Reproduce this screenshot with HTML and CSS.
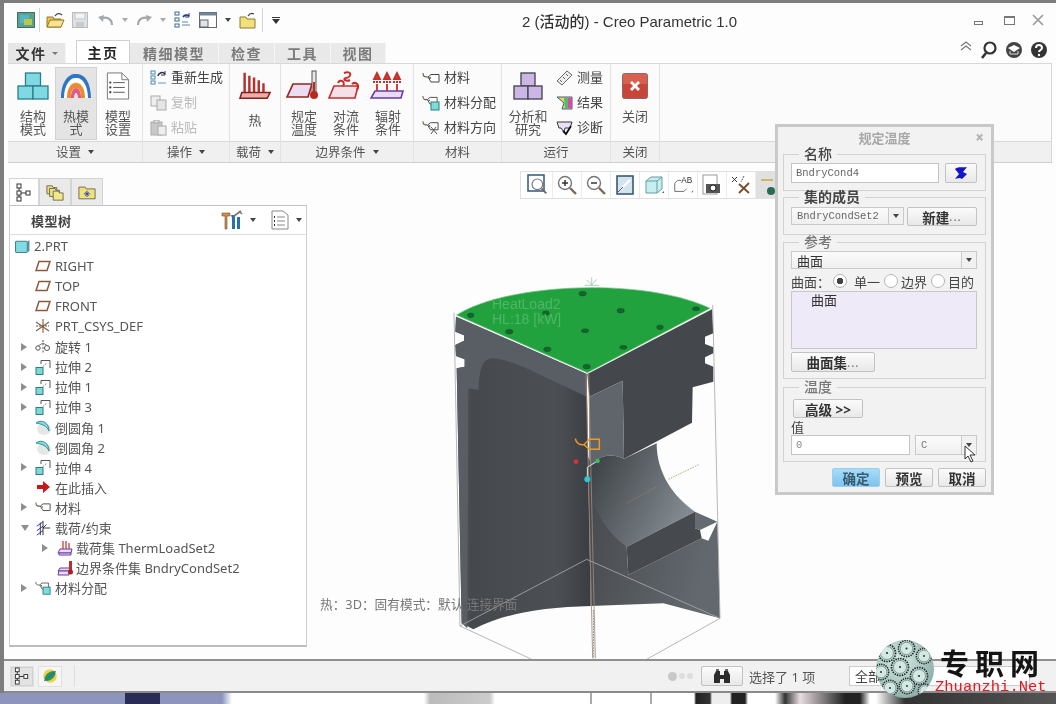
FILE: index.html
```html
<!DOCTYPE html>
<html lang="zh">
<head>
<meta charset="utf-8">
<title>Creo Parametric 1.0</title>
<link rel="stylesheet" href="styles.css">
</head>
<body>
<svg class="defs" width="0" height="0" aria-hidden="true">
  <defs>
    <symbol id="plane" viewBox="0 0 16 12"><path d="M4 1.500H15L12 10.500H1Z" fill="#fff" stroke="#8a5a3c" stroke-width="1.500"/></symbol>
    <symbol id="extrude" viewBox="0 0 16 16"><path d="M6 5V1.500H15V9" fill="none" stroke="#555" stroke-width="1"/><path d="M6 9L12 4" stroke="#888" stroke-dasharray="1.500 1"/><rect x="1" y="8.500" width="7" height="7" fill="#7fd8d4" stroke="#2c7f80"/></symbol>
    <symbol id="round" viewBox="0 0 16 16"><ellipse cx="9" cy="10" rx="7" ry="6" fill="#e4e8e4"/><path d="M1 4C6 0 14 3 14 12C12 7 7 5 1 4Z" fill="#86dcdc" stroke="#3a8c96"/></symbol>
    <symbol id="tag" viewBox="0 0 18 12"><path d="M1 1C1 5 3 5 6 5" fill="none" stroke="#664" stroke-width="1.200"/><path d="M6 5L9 2.500H17V10H9Z" fill="#fff" stroke="#444"/><circle cx="8" cy="6" r=".9" fill="#444"/></symbol>
    <symbol id="tri" viewBox="0 0 8 10"><path d="M1 1L7 5L1 9Z" fill="#8e8e8e"/></symbol>
    <symbol id="mag" viewBox="0 0 22 22"><circle cx="9" cy="9" r="6.500" fill="#fff" stroke="#777" stroke-width="1.400"/><path d="M14 14L20 20" stroke="#7a6a58" stroke-width="2.400"/></symbol>
    <symbol id="gear" viewBox="0 0 40 40"><circle cx="20" cy="20" r="17" fill="#c4dfd9" stroke="#22302e" stroke-width="3.500" stroke-dasharray="3 2"/><circle cx="20" cy="20" r="13" fill="#d3e8e3" stroke="#3c4f4c"/><circle cx="20" cy="20" r="2" fill="#1d2a28"/></symbol>
  </defs>
</svg>

<div class="app">
  <div class="window">
    <header class="titlebar">
      <div class="quick">
        <svg class="qi q1" viewBox="0 0 18 16"><rect x=".5" y=".5" width="17" height="15" fill="#5aa08e" stroke="#3f6f66"/><rect x="3" y="3" width="9" height="8" fill="#56b4c8"/><rect x="7" y="7" width="8" height="6" fill="#b6c94a"/></svg>
        <span class="qsep"></span>
        <svg class="qi q2" viewBox="0 0 19 16"><path d="M1 5H7L8 7H15V15H1Z" fill="#e8c65a" stroke="#96762a"/><path d="M1 15L4 8H18L15 15Z" fill="#f8e48c" stroke="#96762a"/><path d="M9 4C11 1 14 1 16 3" fill="none" stroke="#444" stroke-width="1.300"/></svg>
        <svg class="qi q3" viewBox="0 0 16 16"><rect x=".5" y=".5" width="15" height="15" fill="#dfe2e4" stroke="#bbb"/><rect x="3" y="1" width="10" height="6" fill="#f3f3f3" stroke="#c4c4c4"/><rect x="4" y="10" width="8" height="5" fill="#c8cbcd"/></svg>
        <svg class="qi q4" viewBox="0 0 16 12"><path d="M14 11C14 4 7 2 3 5" fill="none" stroke="#a4a8ac" stroke-width="2.200"/><path d="M0 3L6 1L5 8Z" fill="#a4a8ac"/></svg>
        <i class="caret light q5"></i>
        <svg class="qi q4b" viewBox="0 0 16 12"><path d="M2 11C2 4 9 2 13 5" fill="none" stroke="#a4a8ac" stroke-width="2.200"/><path d="M16 3L10 1L11 8Z" fill="#a4a8ac"/></svg>
        <i class="caret light q6"></i>
        <svg class="qi q7" viewBox="0 0 17 18"><g fill="#fff" stroke="#3a6a90"><rect x="1" y="1" width="4" height="3"/><rect x="1" y="7" width="4" height="3"/><rect x="1" y="13" width="4" height="3"/></g><path d="M8 14H16M8 11H14" stroke="#5a8aa8"/><path d="M9 6A4 4 0 0 1 15 5" fill="none" stroke="#238" stroke-width="1.600"/><path d="M15 2V6H11" fill="none" stroke="#238"/></svg>
        <svg class="qi q8" viewBox="0 0 18 16"><rect x=".5" y=".5" width="17" height="15" fill="#fff" stroke="#666"/><rect x=".5" y=".5" width="17" height="3" fill="#6f8798"/><rect x="1" y="8" width="8" height="7" fill="#dfe6ea" stroke="#666"/></svg>
        <i class="caret q9"></i>
        <svg class="qi q10" viewBox="0 0 17 18"><path d="M1 6H7L8 8H16V17H1Z" fill="#f2e07a" stroke="#8a7c30"/><path d="M9 5C11 2 13 2 15 3" fill="none" stroke="#444" stroke-width="1.300"/></svg>
        <span class="qsep s2"></span>
        <span class="qmore"></span>
      </div>
      <h1 class="title">2 (活动的) - Creo Parametric 1.0</h1>
      <div class="winctl">
        <span class="wmin"></span>
        <span class="wmax"></span>
        <svg class="wclose" viewBox="0 0 12 12"><path d="M1 1L11 11M11 1L1 11" stroke="#999" stroke-width="1.600"/></svg>
      </div>
    </header>

    <nav class="tabs">
      <span class="tab file">文件<i class="caret small"></i></span>
      <span class="tab active">主页</span>
      <span class="tab w89">精细模型</span>
      <span class="tab w56">检查</span>
      <span class="tab w56">工具</span>
      <span class="tab w55">视图</span>
      <div class="helpers">
        <svg class="h-up" viewBox="0 0 12 10"><path d="M1 5L6 1L11 5M1 9L6 5L11 9" fill="none" stroke="#777" stroke-width="1.200"/></svg>
        <svg class="h-i" viewBox="0 0 18 18"><circle cx="10" cy="7" r="5.500" fill="#fff" stroke="#333" stroke-width="2.200"/><path d="M6 12L2 17" stroke="#333" stroke-width="2.600"/></svg>
        <svg class="h-i" viewBox="0 0 18 18"><circle cx="9" cy="9" r="8" fill="#444"/><path d="M3 7L9 11L15 7L9 4Z" fill="#fff"/><path d="M5 10V13H13V10" fill="none" stroke="#ddd"/></svg>
        <svg class="h-i" viewBox="0 0 18 18"><circle cx="9" cy="9" r="8" fill="#333"/><path d="M6 7C6 3 12 3 12 7C12 9 9 9 9 11" fill="none" stroke="#fff" stroke-width="2"/><circle cx="9" cy="14" r="1.200" fill="#fff"/></svg>
      </div>
    </nav>

    <section class="ribbon">
      <div class="group g-setup">
        <div class="gbody">
          <div class="big b32">
            <svg class="ico" viewBox="0 0 32 28"><g fill="#7fd9e2" stroke="#2b7d8c" stroke-width="1.300"><rect x="8.500" y="1" width="15" height="13"/><rect x="1" y="14" width="15" height="13"/><rect x="16" y="14" width="15" height="13"/></g></svg>
            <span>结构<br>模式</span>
          </div>
          <div class="big b42 on">
            <svg class="ico" viewBox="0 0 32 30"><path d="M1 26C1 8 10 1 16 2C24 1 31 10 31 26H26C26 14 22 9 16 9C10 9 6 14 6 26Z" fill="#2f76c4"/><path d="M4 26C4 12 11 5 16 6C22 5 28 13 28 26H25C25 15 21 10 16 10C11 10 7 15 7 26Z" fill="#fff"/><path d="M7 26C7 15 12 11 16 11C20 11 25 15 25 26H21C21 18 19 16 16 16C13 16 11 18 11 26Z" fill="#ef8a2a"/><path d="M11 26C11 20 13 16 16 16C19 16 21 20 21 26H18C18 23 17 21 16 21C15 21 14 23 14 26Z" fill="#e05a8a"/></svg>
            <span>热模<br>式</span>
          </div>
          <div class="big b32">
            <svg class="ico doc" viewBox="0 0 24 29"><path d="M1 1H16L23 8V28H1Z" fill="#fff" stroke="#777"/><path d="M16 1V8H23" fill="none" stroke="#777"/><g stroke="#555"><path d="M7 11H19M7 16H19M7 21H19"/></g><g fill="#444"><circle cx="4" cy="11" r="1.200"/><circle cx="4" cy="16" r="1.200"/><circle cx="4" cy="21" r="1.200"/></g></svg>
            <span>模型<br>设置</span>
          </div>
        </div>
        <div class="glabel">设置<i class="caret"></i></div>
      </div>

      <div class="group g-ops">
        <div class="gbody stack ops">
          <div class="item"><svg class="sm" viewBox="0 0 17 16"><g fill="#fff" stroke="#4a86b0"><rect x="1" y="1" width="4" height="3"/><rect x="1" y="6" width="4" height="3"/><rect x="1" y="11" width="4" height="3"/></g><path d="M8 13H16" stroke="#6a98b8"/><path d="M8 6A4 4 0 0 1 15 4" fill="none" stroke="#235" stroke-width="1.600"/><path d="M15 1V5H11" fill="none" stroke="#235"/></svg>重新生成</div>
          <div class="item off"><svg class="sm" viewBox="0 0 17 16"><rect x="1" y="1" width="9" height="10" fill="#eee" stroke="#aaa"/><rect x="7" y="5" width="9" height="10" fill="#e4e4e4" stroke="#aaa"/></svg>复制</div>
          <div class="item off"><svg class="sm" viewBox="0 0 17 16"><rect x="1" y="2" width="11" height="13" fill="#c8c8c8" stroke="#aaa"/><rect x="4" y="0" width="5" height="3" fill="#ddd" stroke="#aaa"/><rect x="8" y="6" width="8" height="9" fill="#eee" stroke="#aaa"/></svg>粘贴</div>
        </div>
        <div class="glabel">操作<i class="caret"></i></div>
      </div>

      <div class="group g-load">
        <div class="gbody">
          <div class="big b32 single">
            <svg class="ico" viewBox="0 0 34 30"><g stroke="#b8302c" stroke-width="2.600"><path d="M6 1V22M11 4V22M16 6V22M21 9V22M26 12V22"/></g><path d="M3 22H33L30 28H1Z" fill="#e8b0a8" stroke="#8a1f1f" stroke-width="1.600"/></svg>
            <span>热</span>
          </div>
        </div>
        <div class="glabel">载荷<i class="caret"></i></div>
      </div>

      <div class="group g-bc">
        <div class="gbody tight">
          <div class="big b42b">
            <svg class="ico" viewBox="0 0 36 30"><path d="M7 14H26L22 27H1Z" fill="#ebdcf0" stroke="#9c2020" stroke-width="1.700"/><rect x="26" y="1" width="4" height="22" fill="#e8e8e8" stroke="#555"/><rect x="27" y="12" width="2" height="12" fill="#b82a20"/><circle cx="28" cy="25" r="4" fill="#b82a20"/></svg>
            <span>规定<br>温度</span>
          </div>
          <div class="big b42b">
            <svg class="ico" viewBox="0 0 36 30"><path d="M6 16H30L27 28H1Z" fill="#f3e0e8" stroke="#c03030" stroke-width="1.600"/><g fill="none" stroke="#c82a26" stroke-width="2"><path d="M16 3C24 0 24 7 18 8C14 9 18 12 22 10"/><path d="M10 13C12 8 18 12 15 16"/><path d="M24 14C28 11 32 15 29 20"/></g></svg>
            <span>对流<br>条件</span>
          </div>
          <div class="big b42b">
            <svg class="ico" viewBox="0 0 36 30"><path d="M5 21H33L31 28H1Z" fill="#e7dcf4" stroke="#6a3aa8" stroke-width="1.600"/><g stroke="#c4302c" stroke-width="1.800" fill="#d83a34"><path d="M7 21V14M7 3L4 9H10ZM17 21V14M17 3L14 9H20ZM27 21V14M27 3L24 9H30Z"/><path d="M3 12H11M13 12H21M23 12H31" stroke-dasharray="2 1"/></g></svg>
            <span>辐射<br>条件</span>
          </div>
        </div>
        <div class="glabel">边界条件<i class="caret"></i></div>
      </div>

      <div class="group g-mat">
        <div class="gbody stack mats">
          <div class="item"><svg class="sm wide" viewBox="0 0 18 12"><use href="#tag"/></svg>材料</div>
          <div class="item"><svg class="sm wide" viewBox="0 0 18 16"><use href="#tag" width="16" height="11"/><rect x="9" y="7" width="8" height="8" fill="#7fdad8" stroke="#27808a"/></svg>材料分配</div>
          <div class="item"><svg class="sm wide" viewBox="0 0 18 16"><use href="#tag" width="17" height="12"/><path d="M9 7L15 14M14 7L9 14" stroke="#555"/></svg>材料方向</div>
        </div>
        <div class="glabel">材料</div>
      </div>

      <div class="group g-run">
        <div class="gbody">
          <div class="big b42c">
            <svg class="ico" viewBox="0 0 30 28"><g fill="#ccb6e6" stroke="#4a4a58" stroke-width="1.400"><rect x="8" y="1" width="14" height="13"/><rect x="1" y="14" width="14" height="13"/><rect x="15" y="14" width="14" height="13"/></g></svg>
            <span>分析和<br>研究</span>
          </div>
          <div class="stack runs">
            <div class="item"><svg class="sm" viewBox="0 0 17 16"><path d="M1 11L11 1L16 5L6 15Z" fill="#eee" stroke="#666"/><path d="M4 10L6 12M7 7L9 9M10 4L12 6" stroke="#666"/></svg>测量</div>
            <div class="item"><svg class="sm" viewBox="0 0 17 16"><path d="M1 2H16V14H6L8 8Z" fill="#e8d84a" stroke="#3a5a9a"/><path d="M8 3H12V13H9Z" fill="#48c070"/><path d="M12 3H16V13H12Z" fill="#d84aa8"/></svg>结果</div>
            <div class="item"><svg class="sm" viewBox="0 0 17 16"><path d="M1 2H16L14 8H9L8 12L5 8H3Z" fill="#eadff4" stroke="#334"/><path d="M7 11L10 14L15 6" fill="none" stroke="#111" stroke-width="1.800"/></svg>诊断</div>
          </div>
        </div>
        <div class="glabel">运行</div>
      </div>

      <div class="group g-close">
        <div class="gbody">
          <div class="big bclose">
            <svg class="ico" viewBox="0 0 26 26"><rect x=".5" y=".5" width="25" height="25" rx="2" fill="#c8453a" stroke="#8a6a66"/><rect x="1" y="1" width="24" height="10" fill="#d8604f"/><path d="M9 9L17 17M17 9L9 17" stroke="#fff" stroke-width="2.800"/></svg>
            <span>关闭</span>
          </div>
        </div>
        <div class="glabel">关闭</div>
      </div>
      <div class="group g-rest"><div class="gbody"></div><div class="glabel"></div></div>
    </section>

    <main class="main">
      <aside class="side">
        <div class="sidetabs">
          <span class="stab on"><svg viewBox="0 0 16 19"><g fill="#fff" stroke="#333"><rect x="1" y="1" width="4" height="4"/><rect x="1" y="8" width="4" height="4"/><rect x="1" y="14" width="4" height="4"/><rect x="10" y="8" width="4" height="4"/></g><path d="M3 5V8M3 12V14M5 10H10" stroke="#333"/></svg></span>
          <span class="stab"><svg viewBox="0 0 20 19"><path d="M1 2H7L8 4H12V11H1Z" fill="#e8dc78" stroke="#665"/><path d="M4 5H10L11 7H15V14H4Z" fill="#efe282" stroke="#665"/><path d="M8 8H14L15 10H19V18H8Z" fill="#f2e88a" stroke="#665"/></svg></span>
          <span class="stab"><svg viewBox="0 0 20 16"><path d="M1 2H8L9 4H19V15H1Z" fill="#f0e27a" stroke="#665"/><path d="M10 6V13M6.500 9.500H13.500M8 7.500L12 11.500M12 7.500L8 11.500" stroke="#2a3fc0"/></svg></span>
        </div>
        <div class="panel">
          <div class="phead">
            <strong>模型树</strong>
            <svg class="tools" viewBox="0 0 22 20"><path d="M1 3H9V6H6V19H4V6H1Z" fill="#e08a30" stroke="#555" stroke-width=".6"/><path d="M10 5H14V19H11V8Z" fill="#2c6fb0"/><path d="M13 6L20 1M18 1L21 4" stroke="#777" stroke-width="1.600"/><rect x="16" y="7" width="3" height="12" fill="#2c6fb0"/></svg>
            <i class="caret"></i>
            <svg class="tools2" viewBox="0 0 18 20"><path d="M1 1H12L17 5V19H1Z" fill="#fff" stroke="#888"/><path d="M6 7H14M6 11H14M6 15H14" stroke="#888"/><path d="M3 7H4M3 11H4M3 15H4" stroke="#333" stroke-width="2"/></svg>
            <i class="caret"></i>
          </div>
          <ul class="tree">
            <li class="row top"><svg class="ti part" viewBox="0 0 14 13"><rect x=".5" y="2" width="11" height="10.500" rx="1" fill="#7fdce2" stroke="#4a7f88"/><path d="M12 2L13.500 1V11L12 12.500Z" fill="#5a8f98"/></svg>2.PRT</li>
            <li class="row l1"><svg class="ti" viewBox="0 0 16 12"><use href="#plane"/></svg>RIGHT</li>
            <li class="row l1"><svg class="ti" viewBox="0 0 16 12"><use href="#plane"/></svg>TOP</li>
            <li class="row l1"><svg class="ti" viewBox="0 0 16 12"><use href="#plane"/></svg>FRONT</li>
            <li class="row l1"><svg class="ti" viewBox="0 0 16 16"><path d="M1 4L14 13M1 13L14 4M8 1V15" stroke="#8a5a3c" stroke-width="1.100"/><path d="M1 8H14" stroke="#555" stroke-dasharray="2 1"/></svg>PRT_CSYS_DEF</li>
            <li class="row l1 x"><svg class="tw" viewBox="0 0 8 10"><use href="#tri"/></svg><svg class="ti" viewBox="0 0 16 16"><path d="M8 1V15" stroke="#555" stroke-dasharray="2 1.500"/><circle cx="3" cy="9" r="2.200" fill="#fff" stroke="#555"/><circle cx="12" cy="9" r="2.500" fill="#fff" stroke="#555"/><path d="M3 7L8 4L13 7" fill="none" stroke="#777"/></svg>旋转 1</li>
            <li class="row l1 x"><svg class="tw" viewBox="0 0 8 10"><use href="#tri"/></svg><svg class="ti" viewBox="0 0 16 16"><use href="#extrude"/></svg>拉伸 2</li>
            <li class="row l1 x"><svg class="tw" viewBox="0 0 8 10"><use href="#tri"/></svg><svg class="ti" viewBox="0 0 16 16"><use href="#extrude"/></svg>拉伸 1</li>
            <li class="row l1 x"><svg class="tw" viewBox="0 0 8 10"><use href="#tri"/></svg><svg class="ti" viewBox="0 0 16 16"><use href="#extrude"/></svg>拉伸 3</li>
            <li class="row l1"><svg class="ti" viewBox="0 0 16 16"><use href="#round"/></svg>倒圆角 1</li>
            <li class="row l1"><svg class="ti" viewBox="0 0 16 16"><use href="#round"/></svg>倒圆角 2</li>
            <li class="row l1 x"><svg class="tw" viewBox="0 0 8 10"><use href="#tri"/></svg><svg class="ti" viewBox="0 0 16 16"><use href="#extrude"/></svg>拉伸 4</li>
            <li class="row l1"><svg class="ti" viewBox="0 0 16 16"><path d="M2 6H8V2L15 8L8 14V10H2Z" fill="#c81818"/></svg>在此插入</li>
            <li class="row l1 x"><svg class="tw" viewBox="0 0 8 10"><use href="#tri"/></svg><svg class="ti" viewBox="0 0 18 12"><use href="#tag"/></svg>材料</li>
            <li class="row l1 x"><svg class="tw down" viewBox="0 0 10 8"><path d="M1 1H9L5 7Z" fill="#8e8e8e"/></svg><svg class="ti" viewBox="0 0 18 18"><path d="M2 7L9 2M2 12L9 7M2 17L9 12" stroke="#1c2a80"/><path d="M9 1V17M9 9H17M9 9L13 5" stroke="#222" fill="none"/><path d="M6 3V17" stroke="#1c2a80"/></svg>载荷/约束</li>
            <li class="row l2 x"><svg class="tw" viewBox="0 0 8 10"><use href="#tri"/></svg><svg class="ti" viewBox="0 0 16 16"><path d="M6 1V10M9 1V10M12 3V10" stroke="#d05a50" stroke-width="1.500"/><path d="M3 9H15L14 13H1Z" fill="#e8dcf4" stroke="#6a3aa8"/><path d="M2 13H14V15H2Z" fill="#e8dcf4" stroke="#6a3aa8"/></svg>载荷集 ThermLoadSet2</li>
            <li class="row l2"><svg class="tw hide" viewBox="0 0 8 10"></svg><svg class="ti" viewBox="0 0 16 16"><path d="M3 8H13L12 11H1Z" fill="#e8dcf4" stroke="#6a3aa8"/><path d="M2 11H12V15H1Z" fill="#e8dcf4" stroke="#6a3aa8"/><rect x="12" y="1" width="3" height="10" fill="#b83030"/><circle cx="13.500" cy="12" r="2.500" fill="#a82020"/></svg>边界条件集 BndryCondSet2</li>
            <li class="row l1 x"><svg class="tw" viewBox="0 0 8 10"><use href="#tri"/></svg><svg class="ti" viewBox="0 0 18 16"><use href="#tag" width="16" height="11"/><rect x="9" y="7" width="8" height="8" fill="#7fdad8" stroke="#27808a"/></svg>材料分配</li>
          </ul>
        </div>
      </aside>

      <div class="vtools">
        <span class="vt"><svg viewBox="0 0 22 22"><rect x="1" y="1" width="16" height="16" fill="#fff" stroke="#2c5a80" stroke-width="1.500"/><use href="#mag" x="3" y="3" width="18" height="18"/></svg></span>
        <span class="vt"><svg viewBox="0 0 22 22"><use href="#mag"/><path d="M6 9H12M9 6V12" stroke="#333" stroke-width="1.500"/></svg></span>
        <span class="vt"><svg viewBox="0 0 22 22"><use href="#mag"/><path d="M6 9H12" stroke="#333" stroke-width="1.500"/></svg></span>
        <span class="vt"><svg viewBox="0 0 22 22"><rect x="3" y="2" width="16" height="18" fill="#d4e4ee" stroke="#2c4f6a" stroke-width="1.500"/><path d="M6 16L16 6" stroke="#fff" stroke-width="2"/><path d="M4 18L9 13" stroke="#557"/></svg></span>
        <span class="vt"><svg viewBox="0 0 22 22"><path d="M3 7L8 3H19V15L14 19H3Z" fill="#c6f0f0" stroke="#6a9a9a"/><path d="M3 7H14V19M14 7L19 3" fill="none" stroke="#6a9a9a"/><path d="M19 19H21V17Z" fill="#555"/></svg></span>
        <span class="vt"><svg viewBox="0 0 24 22"><path d="M3 9L6 6H10M3 9V18H13L16 15" fill="none" stroke="#666"/><text x="10" y="9" class="vt-t">AB</text><path d="M21 19H23V17Z" fill="#555"/></svg></span>
        <span class="vt"><svg viewBox="0 0 22 22"><rect x="2" y="1" width="14" height="19" fill="#fff" stroke="#999"/><rect x="5" y="10" width="14" height="9" fill="#555"/><circle cx="12" cy="14" r="3" fill="#fff" stroke="#222"/></svg></span>
        <span class="vt"><svg viewBox="0 0 22 22"><path d="M9 10L19 19M19 9L9 19" stroke="#7a4a2c" stroke-width="1.800"/><path d="M2 3L7 8M7 3L2 8" stroke="#333"/><path d="M14 2L11 8" stroke="#555" stroke-dasharray="2 1"/></svg></span>
        <span class="vt act"><svg viewBox="0 0 22 22"><path d="M2 6H14" stroke="#c8a838" stroke-width="1.500"/><path d="M16 2H21L17 12" fill="none" stroke="#333" stroke-width="1.500"/><circle cx="12" cy="17" r="4" fill="#2a6a58"/></svg></span>
      </div>

      <svg class="model" viewBox="0 0 930 1170" aria-label="3D 模型">
        <defs>
          <linearGradient id="bore" x1="0" y1=".1" x2="1" y2=".6"><stop offset="0" stop-color="#3a3e42"/><stop offset=".5" stop-color="#5f656a"/><stop offset="1" stop-color="#858d93"/></linearGradient>
          <linearGradient id="leftf" x1="0" y1="0" x2="1" y2="0"><stop offset="0" stop-color="#5c6167"/><stop offset=".12" stop-color="#45494e"/><stop offset=".75" stop-color="#4c5055"/><stop offset="1" stop-color="#3a3d41"/></linearGradient>
          <linearGradient id="rightl" x1="0" y1="0" x2="1" y2=".3"><stop offset="0" stop-color="#45484c"/><stop offset="1" stop-color="#62686e"/></linearGradient>
        </defs>
        <!-- left wall -->
        <path d="M78 140L470 312L482 1008C340 1012 220 1030 130 1078L95 1060L80 295L104 290L104 268L78 258L76 225L102 212L102 196L76 185Z" fill="url(#leftf)"/>
        <path d="M78 140L470 312L470 380L395 345C320 310 250 270 190 265C160 265 148 290 146 360L115 355L112 1075L95 1060L80 295L104 290L104 268L78 258L76 225L102 212L102 196L76 185Z" fill="#595e64"/>
        <!-- lower right -->
        <path d="M474 560L590 830L595 915L815 805L835 812L862 755L870 1045L700 1000L482 1008Z" fill="url(#rightl)"/>
        <!-- upper right block -->
        <path d="M472 312L846 118L850 190L825 200L825 222L850 232L850 250L825 262L825 280L850 290L850 335L788 352L786 458L582 566L578 332L478 380Z" fill="#44474b"/>
        <path d="M478 380L578 332L582 566C540 548 508 555 478 590Z" fill="#60656b"/>
        <!-- pin bore -->
        <path d="M680 520L582 566C540 548 508 555 478 590L490 700C520 770 555 805 590 830L795 725C730 680 680 610 680 520Z" fill="url(#bore)"/>
        <!-- lower block -->
        <path d="M590 830L795 725V775L810 780L815 805L595 915Z" fill="#46494d"/>
        <path d="M795 725L862 755L810 780L795 775Z" fill="#656b71"/>
        <!-- green top -->
        <path d="M80 135C230 40 640 20 840 115L472 308Z" fill="#22a23f" stroke="#6fbf7f" stroke-width="2"/>
        <g fill="#17652e" stroke="#0c3f1c"><ellipse cx="122" cy="136" rx="10" ry="7"/><ellipse cx="348" cy="129" rx="10" ry="7"/><ellipse cx="238" cy="185" rx="11" ry="7"/><ellipse cx="458" cy="71" rx="11" ry="7"/><ellipse cx="572" cy="122" rx="11" ry="7"/><ellipse cx="798" cy="116" rx="11" ry="6"/><ellipse cx="465" cy="182" rx="11" ry="6"/><ellipse cx="690" cy="172" rx="10" ry="7"/><ellipse cx="352" cy="238" rx="11" ry="7"/><ellipse cx="580" cy="232" rx="11" ry="6"/><ellipse cx="470" cy="290" rx="11" ry="7"/></g>
        <text class="hl" x="186" y="118">HeatLoad2</text>
        <text class="hl" x="186" y="162">HL:18 [kW]</text>
        <path d="M470 30L485 45L500 28M464 46H506M485 22V45" fill="none" stroke="#7fbf8f" stroke-width="2"/>
        <!-- wire box -->
        <g fill="none" stroke="#a8a8a8" stroke-width="2.500">
          <path d="M72 128L90 1068L305 1168M90 1068L470 868L870 1045L650 1168M848 105L870 1045"/>
        </g>
        <path d="M468 310L488 1165M476 310L496 1165" stroke="#a08a78" stroke-width="2.500" fill="none"/>
        <path d="M490 1020L491 1165" stroke="#555" stroke-width="2" stroke-dasharray="5 3"/>
        <path d="M590 700L680 650M715 628L808 583" stroke="#9a8a50" stroke-width="2" stroke-dasharray="5 3" fill="none"/>
        <!-- datum markers -->
        <path d="M436 506C438 520 450 526 462 524L478 508H508V538H478L462 524" fill="none" stroke="#eb9a28" stroke-width="4.500"/>
        <path d="M472 628V592L503 573" stroke="#d8e8e0" stroke-width="3" fill="none"/>
        <circle cx="472" cy="628" r="9" fill="#28c8d0"/><circle cx="503" cy="573" r="6.500" fill="#28c858"/><circle cx="438" cy="575" r="7" fill="#d8303a"/>
      </svg>

      <p class="gstatus">热：3D：固有模式：默认 连接界面</p>

      <form class="dialog">
        <div class="dtitle"><span>规定温度</span><b>×</b></div>
        <fieldset class="fs f1">
          <legend>名称</legend>
          <div class="line">
            <span class="field mono grow">BndryCond4</span>
            <span class="btn b-sym"><svg viewBox="0 0 16 14"><path d="M2 3C6 0 10 2 14 1L10 6L14 8L9 13C6 11 4 13 2 13L6 8Z" fill="#1414c8"/></svg></span>
          </div>
        </fieldset>
        <fieldset class="fs f2">
          <legend class="strong">集的成员</legend>
          <div class="line">
            <span class="combo c-set"><span class="mono">BndryCondSet2</span><i class="drop"><i class="caret"></i></i></span>
            <span class="btn b-new">新建<small>...</small></span>
          </div>
        </fieldset>
        <fieldset class="fs f3">
          <legend class="soft">参考</legend>
          <span class="combo c-full"><span>曲面</span><i class="drop"><i class="caret"></i></i></span>
          <div class="radios">
            <span>曲面：</span><i class="radio on-r"></i><span>单一</span><i class="radio"></i><span>边界</span><i class="radio"></i><span>目的</span>
          </div>
          <div class="listbox">曲面</div>
          <span class="btn b-set">曲面集<small>...</small></span>
        </fieldset>
        <fieldset class="fs f4">
          <legend class="soft">温度</legend>
          <span class="btn b-adv">高级 &gt;&gt;</span>
          <div class="vlabel">值</div>
          <div class="line spaced">
            <span class="field v-in">0</span>
            <span class="combo c-unit"><span class="v-c">C</span><i class="drop"><i class="caret"></i></i></span>
          </div>
        </fieldset>
        <div class="actions">
          <span class="btn act-b primary">确定</span>
          <span class="btn act-b">预览</span>
          <span class="btn act-b">取消</span>
        </div>
        <svg class="cursor" viewBox="0 0 12 18"><path d="M1 1V14L4 11L7 17L9 16L6 10H11Z" fill="#fff" stroke="#333"/></svg>
      </form>
    </main>

    <footer class="status">
      <span class="sbtn on"><svg viewBox="0 0 16 19"><g fill="#fff" stroke="#333"><rect x="1" y="1" width="4" height="4"/><rect x="1" y="8" width="4" height="4"/><rect x="1" y="14" width="4" height="4"/><rect x="10" y="8" width="4" height="4"/></g><path d="M3 5V8M3 12V14M5 10H10" stroke="#333"/></svg></span>
      <span class="sbtn"><svg viewBox="0 0 20 20"><circle cx="10" cy="10" r="8.500" fill="#f0d050"/><ellipse cx="10" cy="10" rx="8" ry="4.500" transform="rotate(-40 10 10)" fill="#2a9a4a"/><path d="M3 16L17 4" stroke="#2a6ac8" stroke-width="1.500"/></svg></span>
      <span class="ssep"></span>
      <div class="sright">
        <span class="dots"><i></i><i class="d2"></i><i class="d2"></i></span>
        <span class="btn binoc"><svg viewBox="0 0 18 16"><path d="M3 3H7V15H1V7ZM11 3H15L17 7V15H11ZM7 7H11V11H7Z" fill="#2c2c2c"/><path d="M3 1H6V3H3ZM12 1H15V3H12Z" fill="#666"/></svg></span>
        <span class="seltext">选择了 1 项</span>
        <span class="sfilter">全部</span>
      </div>
    </footer>
  </div>
  <div class="strip"></div>
  <div class="watermark">
    <svg class="ball" viewBox="0 0 60 60" aria-hidden="true">
      <defs><radialGradient id="sph" cx=".4" cy=".35" r=".8"><stop offset="0" stop-color="#d8ebe6"/><stop offset="1" stop-color="#7fa39c"/></radialGradient><clipPath id="bc"><circle cx="30" cy="30" r="29"/></clipPath></defs>
      <circle cx="30" cy="30" r="29" fill="url(#sph)"/>
      <g clip-path="url(#bc)">
        <use href="#gear" x="2" y="4" width="20" height="20"/><use href="#gear" x="22" y="0" width="19" height="19"/><use href="#gear" x="40" y="8" width="18" height="18"/>
        <use href="#gear" x="-3" y="24" width="18" height="18"/><use href="#gear" x="15" y="18" width="20" height="20"/><use href="#gear" x="34" y="27" width="20" height="20"/>
        <use href="#gear" x="6" y="40" width="18" height="18"/><use href="#gear" x="23" y="38" width="18" height="18"/><use href="#gear" x="42" y="44" width="16" height="16"/>
      </g>
    </svg>
    <div class="wtext">
      <span class="wcn">专职网</span>
      <span class="wen">Zhuanzhi.Net</span>
    </div>
  </div>
</div>
</body>
</html>
```

FILE: styles.css
```css
* { box-sizing: border-box; }
html, body { margin: 0; padding: 0; background: #fff; }
body {
  font-family: "Noto Sans", "Noto Sans CJK SC", sans-serif;
  font-size: 13px;
  color: #444;
}
.defs { position: absolute; }
i { font-style: normal; }

.app {
  position: relative;
  width: 1056px;
  height: 704px;
  overflow: hidden;
  display: flex;
  flex-direction: column;
  filter: blur(.35px);
}
.window {
  height: 693px;
  flex: none;
  display: flex;
  flex-direction: column;
  border-top: 3px solid #7d7d7d;
  border-left: 4px solid #7d7d7d;
  background: #fdfdfd;
}
.strip {
  flex: 1;
  background: linear-gradient(90deg,
    #8d95bf 0, #8d95bf 125px, #2a2c56 125px, #2a2c56 160px, #8d95bf 160px, #8d95bf 222px, #fff 232px,
    #fff 424px, #bbb 430px, #ccc 490px, #fff 495px, #fff 590px, #aaa 590px, #aaa 592px, #fff 592px,
    #fff 650px, #aaa 650px, #aaa 652px, #fff 652px, #fff 694px, #222 696px, #333 710px, #eee 712px,
    #eee 730px, #222 732px, #222 745px, #fff 748px, #fff 775px, #333 785px, #e8dde0 800px, #222 845px, #222 860px, #fff 870px, #fff 876px, #333 905px, #555 1056px);
}

/* title bar */
.titlebar { height: 37px; flex: none; display: flex; align-items: center; padding-bottom: 3px; }
.quick { position: relative; width: 518px; height: 34px; display: flex; align-items: center; padding-left: 13px; flex: none; }
.qi { flex: none; display: block; }
.q1 { width: 18px; height: 16px; }
.qsep { width: 1px; height: 24px; background: #d4d4d4; margin: 0 6px 0 4px; flex: none; }
.q2 { width: 19px; height: 16px; }
.q3 { width: 16px; height: 16px; margin-left: 7px; }
.q4 { width: 16px; height: 12px; margin-left: 10px; }
.q4b { width: 16px; height: 12px; margin-left: 8px; }
.q5, .q6 { margin-left: 8px; }
.q7 { width: 17px; height: 18px; margin-left: 8px; }
.q8 { width: 18px; height: 16px; margin-left: 8px; }
.q9 { margin-left: 8px; }
.q10 { width: 17px; height: 18px; margin-left: 8px; }
.s2 { margin: 0 9px 0 6px; }
.qmore { width: 8px; height: 6px; border-top: 1px solid #333; position: relative; flex: none; }
.qmore::after { content: ""; position: absolute; left: 0; top: 1px; border: 4px solid transparent; border-top: 5px solid #333; }
.title { margin: 0; font: 500 15px "Liberation Sans", "Noto Sans CJK SC", sans-serif; color: #333; white-space: nowrap; }
.winctl { margin-left: auto; display: flex; align-items: center; padding-right: 12px; }
.wmin { width: 9px; height: 4px; border: 1px solid #777; margin-top: 5px; }
.wmax { width: 11px; height: 9px; border: 1px solid #777; border-top-width: 2px; margin-left: 21px; }
.wclose { width: 12px; height: 12px; margin-left: 17px; }

.caret { display: inline-block; width: 0; height: 0; border: 3.500px solid transparent; border-top: 4px solid #444; border-bottom: 0; vertical-align: middle; flex: none; }
.caret.light { border-top-color: #aaa; }
.caret.small { border-width: 3px; border-top-width: 3px; border-bottom: 0; border-top-color: #777; margin-left: 5px; }

/* tabs */
.tabs { height: 23px; flex: none; display: flex; align-items: flex-end; padding-left: 4px; font-size: 14px; letter-spacing: 1.500px; font-weight: 700; }
.tab { height: 20px; display: flex; align-items: center; justify-content: center; background: #e9e9e9; color: #7a7a7a; border-right: 1px solid #f6f6f6; flex: none; }
.tab.file { width: 58px; margin-right: 10px; color: #333; background: #e6e6e6; }
.tab.active { width: 54px; height: 23px; background: #fff; color: #222; border: 1px solid #d0d0d0; border-bottom: 0; }
.w89 { width: 89px; }
.w56 { width: 56px; }
.w55 { width: 55px; }
.helpers { margin-left: auto; height: 23px; display: flex; align-items: flex-start; padding-top: 1px; padding-right: 8px; gap: 7px; }
.h-up { width: 12px; height: 10px; margin-top: 0; margin-right: 1px; }
.h-i { width: 18px; height: 18px; }

/* ribbon */
.ribbon { margin: 0 0 0 4px; width: 1044px; height: 100px; flex: none; display: grid; grid-template-columns: 135px 87px 51px 133px 88px 109px 49px 1fr; border-top: 1px solid #d8d8d8; border-bottom: 1px solid #cfcfcf; background: #fbfbfb; }
.group { display: flex; flex-direction: column; border-right: 1px solid #e2e2e2; min-width: 0; }
.g-rest { border-right: 1px solid #d8d8d8; }
.gbody { height: 77px; flex: none; display: flex; line-height: 13px; }
.gbody.tight { padding-left: 2px; }
.glabel { flex: 1; display: flex; align-items: center; justify-content: center; gap: 7px; padding-bottom: 1px; background: #f0f0f0; border-top: 1px solid #d8d8d8; color: #555; font-size: 12.500px; }
.big { display: flex; flex-direction: column; align-items: center; color: #555; font-size: 13px; text-align: center; flex: none; }
.big .ico { height: 28px; margin-top: 8px; margin-bottom: 10px; flex: none; }
.b32 { width: 40px; }
.g-setup .gbody { padding-left: 5px; }
.b42 { width: 42px; height: 73px; margin: 3px 1px 0 2px; }
.on { background: #e4e4e4; box-shadow: inset 0 0 0 1px #d2d2d2; }
.b42.on .ico { margin-top: 5px; width: 32px; height: 30px; margin-bottom: 8px; }
.doc { width: 24px; }
.b32:first-child .ico { width: 32px; }
.single { width: 51px; }
.g-load .big { width: 50px; }
.g-load .ico { width: 34px; height: 30px; margin-top: 7px; margin-bottom: 13px; }
.b42b { width: 42px; }
.b42b .ico { width: 36px; height: 30px; margin-top: 6px; margin-bottom: 10px; }
.b42c { width: 50px; margin-left: 1px; }
.b42c .ico { width: 30px; height: 28px; }
.bclose { width: 48px; }
.bclose .ico { width: 26px; height: 26px; margin-top: 9px; margin-bottom: 11px; }
.stack { flex-direction: column; padding-top: 1px; }
.item { height: 25px; display: flex; align-items: center; gap: 4px; color: #444; font-size: 13px; flex: none; white-space: nowrap; }
.item.off { color: #bbb; }
.sm { width: 17px; height: 16px; flex: none; }
.sm.wide { width: 18px; }
.ops { padding-left: 7px; }
.mats { padding-left: 8px; }
.runs { display: flex; padding-left: 3px; padding-top: 1px; }

/* main */
.main { position: relative; flex: 1; min-height: 0; display: flex; }
.side { width: 303px; flex: none; padding: 15px 0 12px 5px; display: flex; flex-direction: column; }
.sidetabs { height: 28px; flex: none; display: flex; }
.stab { width: 32px; display: flex; align-items: center; justify-content: center; background: #eaeaea; border: 1px solid #d4d4d4; border-bottom: 0; }
.stab.on { width: 30px; background: #fff; box-shadow: none; }
.stab svg { width: 18px; height: 19px; }
.panel { flex: 1; display: flex; flex-direction: column; width: 298px; background: #fff; border: 1px solid #cfcfcf; border-bottom: 2px solid #bdbdbd; border-top-color: #c4c4c4; margin-top: -1px; }
.phead { height: 29px; flex: none; display: flex; align-items: center; gap: 7px; padding: 0 4px 0 21px; border-bottom: 1px solid #dcdcdc; }
.phead strong { font-size: 13px; color: #444; margin-right: auto; letter-spacing: .5px; }
.tools { width: 22px; height: 20px; }
.tools2 { width: 18px; height: 20px; margin-left: 8px; }
.tree { list-style: none; margin: 0; padding: 1px 0 0; }
.row { height: 20.120px; display: flex; align-items: center; white-space: nowrap; color: #555; font-size: 13px; }
.ti { width: 16px; height: 16px; flex: none; margin-right: 4px; }
.tw { width: 8px; height: 10px; flex: none; }
.tw.down { width: 10px; height: 8px; }
.tw.hide { visibility: hidden; }
.row.top { padding-left: 5px; }
.top .part { width: 15px; height: 14px; margin-right: 4px; }
.l1 { padding-left: 25px; }
.l1.x { padding-left: 10px; }
.l1.x .tw { margin-right: 7px; }
.l1.x .tw.down { margin-right: 5px; }
.l2 { padding-left: 31px; }
.l2 .tw { margin-right: 8px; }
.l2 .ti { margin-right: 3px; }

.vtools { position: absolute; left: 516px; top: 8px; width: 270px; height: 28px; display: flex; padding-left: 3px; background: #fff; border: 1px solid #e0e0e0; }
.vt { width: 29px; display: flex; align-items: center; justify-content: center; border-right: 1px solid #ececec; flex: none; }
.vt svg { width: 22px; height: 22px; }
.vt.act { background: #e0e0e0; }
.vt-t { font: 9px "Liberation Sans", sans-serif; fill: #333; }

.model { position: absolute; left: 426px; top: 107px; width: 310px; height: 390px; }
.hl { font: 42px "Liberation Sans", sans-serif; fill: #4fb666; }
.gstatus { position: absolute; left: 316px; top: 431px; margin: 0; font-size: 12.700px; color: #777; white-space: nowrap; }

/* dialog */
.dialog { position: absolute; left: 771px; top: -39px; width: 219px; height: 371px; display: flex; flex-direction: column; padding: 0 5px; border: 3px solid #c9c9c9; background: #f2f2f2; color: #333; }
.dtitle { height: 21px; flex: none; display: flex; align-items: center; justify-content: center; position: relative; color: #a8a8a8; font-weight: 700; font-size: 13px; }
.dtitle b { position: absolute; right: 2px; top: 1px; color: #b4b4b4; font-size: 15px; line-height: 19px; }
.fs { margin: 0; min-width: 0; border: 1px solid #d2d2d2; padding: 0 8px 7px 7px; flex: none; display: flex; flex-direction: column; align-items: stretch; }
.fs legend { margin-left: 8px; padding: 0 5px; font-size: 14px; line-height: 12px; color: #444; font-weight: 500; }
.fs legend.strong { font-weight: 700; }
.fs legend.soft { color: #777; }
.f1 { padding-top: 3px; }
.f2 { padding-top: 4px; padding-bottom: 8px; }
.f3 { padding-top: 3px; padding-bottom: 6px; margin-top: 1px; }
.f4 { padding-top: 6px; padding-bottom: 6px; margin-top: 2px; }
.line { display: flex; gap: 6px; }
.line.spaced { gap: 5px; }
.mono { font-family: "Liberation Mono", monospace; font-size: 10.500px; color: #666; }
.field { height: 20px; background: #fff; border: 1px solid #c4c4c4; padding: 0 4px; line-height: 18px; display: block; white-space: nowrap; }
.grow { flex: 1; }
.btn { display: flex; align-items: center; justify-content: center; flex: none; height: 20px; background: linear-gradient(#fbfbfb, #e8e8e8); border: 1px solid #c2c2c2; border-radius: 2px; font-weight: 700; font-size: 13.500px; color: #333; }
.btn small { font-weight: 400; font-size: 12px; color: #777; letter-spacing: 1px; }
.b-sym { width: 32px; }
.b-sym svg { width: 16px; height: 14px; }
.combo { display: flex; align-items: center; height: 18px; background: linear-gradient(#fbfbfb, #efefef); border: 1px solid #cacaca; padding-left: 5px; font-size: 13px; color: #333; flex: none; }
.drop { margin-left: auto; width: 15px; height: 100%; display: flex; align-items: center; justify-content: center; border-left: 1px solid #cacaca; background: #f1f1f1; }
.c-set { width: 113px; }
.b-new { width: 70px; height: 19px; margin-left: -3px; }
.c-full { width: 186px; }
.radios { height: 18px; margin-top: 3px; display: flex; align-items: center; font-size: 13px; color: #444; gap: 3px; white-space: nowrap; flex: none; }
.radio { width: 14px; height: 14px; border-radius: 50%; border: 1px solid #b4b4b4; background: #fff; display: block; flex: none; margin-left: 1px; }
.radio.on-r { background: radial-gradient(circle, #444 0, #444 3px, #fff 3.500px); margin-left: 0; margin-right: 4px; }
.listbox { height: 58px; margin-top: 1px; background: #eeeaf7; border: 1px solid #c8c8c8; padding: 1px 0 0 19px; font-size: 13px; line-height: 15px; color: #333; flex: none; }
.b-set { width: 84px; margin-top: 3px; }
.b-adv { width: 70px; height: 19px; margin-left: 2px; }
.vlabel { height: 17px; font-size: 13px; line-height: 18px; color: #444; flex: none; }
.v-in { width: 119px; color: #888; font-family: "Liberation Mono", monospace; font-size: 10.500px; }
.c-unit { width: 62px; height: 20px; }
.v-c { font-family: "Liberation Mono", monospace; font-size: 10.500px; color: #777; }
.actions { margin-top: 6px; height: 19px; display: flex; justify-content: flex-end; gap: 5px; flex: none; }
.act-b { width: 48px; height: 19px; }
.primary { background: linear-gradient(#a8dcf8, #7cc4ee); border-color: #a0cde8; color: #3a5a70; }
.cursor { position: absolute; left: 186px; top: 318px; width: 12px; height: 18px; }

/* status */
.status { height: 34px; flex: none; position: relative; display: flex; align-items: center; padding-left: 6px; gap: 4px; background: #f1f1f1; border-top: 2px solid #8f8f8f; border-bottom: 2px solid #8a8a8a; }
.sbtn { width: 24px; height: 21px; display: flex; align-items: center; justify-content: center; background: #f6f6f6; border: 1px solid #e0e0e0; }
.sbtn svg { width: 16px; height: 18px; }
.sbtn.on { background: #e2e2e2; }
.ssep { width: 1px; height: 22px; background: #ddd; margin-left: 8px; }
.sright { margin-left: auto; display: flex; align-items: center; padding-right: 26px; }
.dots { width: 33px; display: flex; align-items: center; gap: 2px; }
.dots i { width: 9px; height: 9px; border-radius: 50%; background: #c8c8c8; }
.dots i.d2 { width: 6px; height: 6px; background: #ddd; }
.binoc { width: 42px; height: 20px; }
.binoc svg { width: 18px; height: 16px; }
.seltext { width: 106px; padding-left: 6px; color: #555; font-size: 13px; white-space: nowrap; }
.sfilter { width: 181px; height: 20px; padding-left: 5px; margin-left: 0; background: #fff; border: 1px solid #ccc; line-height: 18px; font-size: 13px; color: #444; }

/* watermark */
.watermark { position: absolute; left: 875px; top: 639px; display: flex; }
.ball { width: 60px; height: 60px; flex: none; }
.wtext { display: flex; flex-direction: column; padding-top: 7px; }
.wcn { font: 700 29px/33px "Noto Sans CJK SC", sans-serif; color: #141414; letter-spacing: 6px; margin-left: 5px; white-space: nowrap; }
.wen { font: 400 15.500px/17px "Liberation Mono", monospace; color: #e8161c; white-space: nowrap; }
```
